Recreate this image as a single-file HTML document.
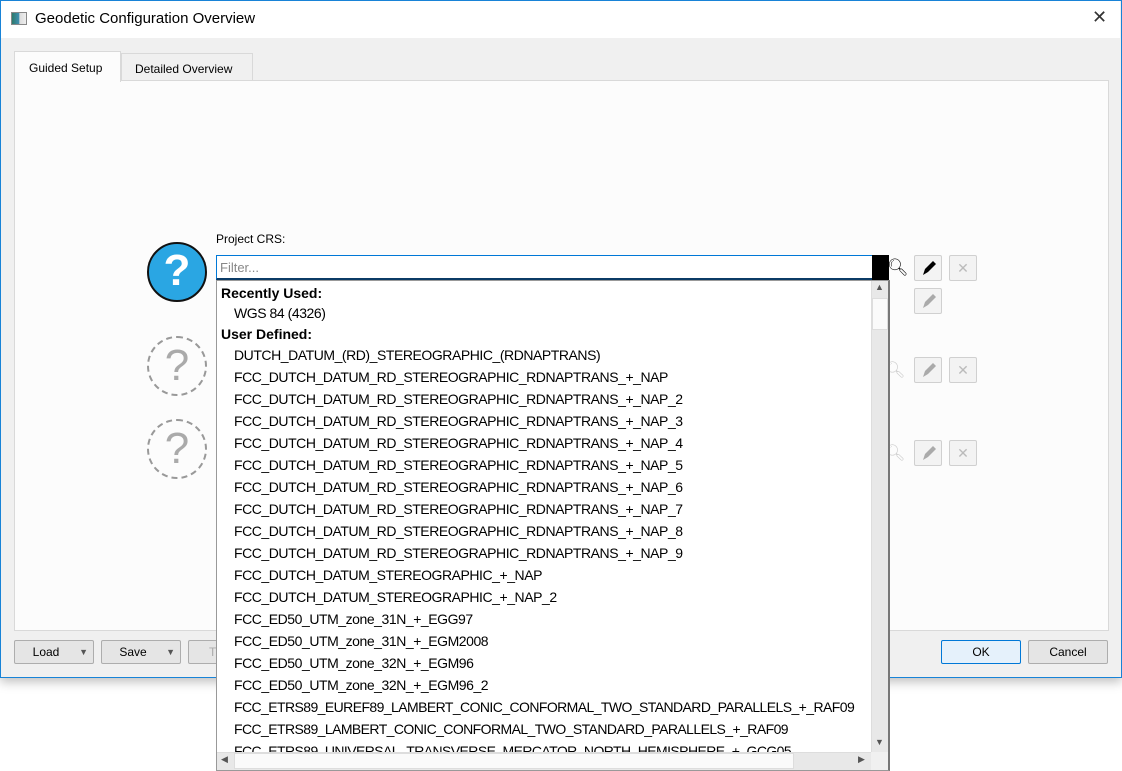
<!DOCTYPE html>
<html><head><style>
*{box-sizing:border-box;margin:0;padding:0}
body{width:1122px;height:771px;background:#fff;position:relative;overflow:hidden;font-family:"Liberation Sans",sans-serif;font-size:12px;color:#000}
.abs{position:absolute}
.win{left:0;top:0;width:1122px;height:678px;border:1px solid #1883d7;background:#f0f0f0;box-shadow:0 4px 10px rgba(0,0,0,.25)}
.title{left:1px;top:1px;width:1119px;height:37px;background:#fff}
.btn{position:absolute;border:1px solid #adadad;background:#e5e5e5;border-radius:2px;text-align:center;font-size:12px}
.tb{position:absolute;width:28px;height:26px;border:1px solid #d0d0d0;background:#f3f3f3;border-radius:2px}
.item{position:absolute;left:17px;font-size:14px;white-space:nowrap;letter-spacing:-0.45px}
.hdr{position:absolute;left:4px;font-size:14px;font-weight:bold;white-space:nowrap}
</style></head><body>
<div class="abs win"></div>
<div class="abs title"></div>
<div class="abs" style="left:11px;top:12px;width:16px;height:13px;border:1px solid #888;background:linear-gradient(90deg,#2d7a6c 0,#3f8fb0 50%,#ddd 55%,#eee)"></div>
<div class="abs" style="left:35px;top:10px;font-size:15px">Geodetic Configuration Overview</div>
<div class="abs" style="left:1092px;top:7px;font-size:18px;color:#333">✕</div>
<!-- tabs -->
<div class="abs" style="left:121px;top:53px;width:132px;height:28px;background:#f0f0f0;border:1px solid #d9d9d9;border-bottom:none"></div>
<div class="abs" style="left:135px;top:62px;font-size:12px">Detailed Overview</div>
<div class="abs" style="left:14px;top:80px;width:1095px;height:551px;background:#fcfcfc;border:1px solid #d9d9d9"></div>
<div class="abs" style="left:14px;top:51px;width:107px;height:31px;background:#fcfcfc;border:1px solid #d9d9d9;border-bottom:none"></div>
<div class="abs" style="left:29px;top:61px;font-size:12px">Guided Setup</div>
<!-- icons -->
<div class="abs" style="left:147px;top:242px;width:60px;height:60px;border-radius:50%;background:#2aa6e3;border:2px solid #111;color:#fff;font-weight:bold;font-size:44px;text-align:center;line-height:54px">?</div>
<div class="abs" style="left:147px;top:336px;width:60px;height:60px;border-radius:50%;border:2px dashed #999;color:#aaa;font-size:44px;text-align:center;line-height:56px">?</div>
<div class="abs" style="left:147px;top:419px;width:60px;height:60px;border-radius:50%;border:2px dashed #999;color:#aaa;font-size:44px;text-align:center;line-height:56px">?</div>
<div class="abs" style="left:216px;top:232px;font-size:12px">Project CRS:</div>
<!-- right buttons -->
<div class="abs" style="left:887px;top:258px;font-size:17px;color:#111">&#x1F50D;&#xFE0E;</div>
<div class="tb" style="left:914px;top:255px"><svg width="26" height="24"><path d="M8 19 L10 13 L18 5 L21 8 L13 16 Z" fill="#000"/></svg></div>
<div class="tb" style="left:949px;top:255px;color:#bbb;font-size:14px;text-align:center;line-height:24px">✕</div>
<div class="tb" style="left:914px;top:288px"><svg width="26" height="24"><path d="M8 19 L10 13 L18 5 L21 8 L13 16 Z" fill="#aaa"/></svg></div>
<div class="tb" style="left:914px;top:357px"><svg width="26" height="24"><path d="M8 19 L10 13 L18 5 L21 8 L13 16 Z" fill="#aaa"/></svg></div>
<div class="tb" style="left:949px;top:357px;color:#bbb;font-size:14px;text-align:center;line-height:24px">✕</div>
<div class="tb" style="left:914px;top:440px"><svg width="26" height="24"><path d="M8 19 L10 13 L18 5 L21 8 L13 16 Z" fill="#aaa"/></svg></div>
<div class="tb" style="left:949px;top:440px;color:#bbb;font-size:14px;text-align:center;line-height:24px">✕</div>
<div class="abs" style="left:885px;top:360px;font-size:16px;color:#ccc">&#x1F50D;&#xFE0E;</div>
<div class="abs" style="left:885px;top:443px;font-size:16px;color:#ccc">&#x1F50D;&#xFE0E;</div>
<!-- bottom buttons -->
<div class="btn" style="left:14px;top:640px;width:80px;height:24px;line-height:23px;padding-right:16px">Load<span style="position:absolute;right:5px;font-size:9px;color:#555">▼</span></div>
<div class="btn" style="left:101px;top:640px;width:80px;height:24px;line-height:23px;padding-right:16px">Save<span style="position:absolute;right:5px;font-size:9px;color:#555">▼</span></div>
<div class="btn" style="left:188px;top:640px;width:40px;height:24px;line-height:23px;color:#aaa;text-align:left;padding-left:20px">T</div>
<div class="btn" style="left:941px;top:640px;width:80px;height:24px;line-height:23px;border-color:#0078d7;background:#e5f1fb">OK</div>
<div class="btn" style="left:1028px;top:640px;width:80px;height:24px;line-height:23px">Cancel</div>
<!-- filter -->
<div class="abs" style="left:216px;top:255px;width:657px;height:25px;background:#fff;border:1px solid #0078d7;border-bottom:2px solid #0b3b66"></div>
<div class="abs" style="left:220px;top:260px;font-size:13px;color:#888">Filter...</div>
<div class="abs" style="left:872px;top:255px;width:17px;height:25px;background:#000"></div>
<!-- popup -->
<div class="abs" style="left:216px;top:280px;width:674px;height:491px;background:#fff;border:1px solid #999;border-right:2px solid #777;overflow:hidden">
 <div class="hdr" style="top:4px">Recently Used:</div>
 <div class="item" style="top:24px">WGS 84 (4326)</div>
 <div class="hdr" style="top:45px">User Defined:</div>
 <div class="item" style="top:66px">DUTCH_DATUM_(RD)_STEREOGRAPHIC_(RDNAPTRANS)</div>
 <div class="item" style="top:88px">FCC_DUTCH_DATUM_RD_STEREOGRAPHIC_RDNAPTRANS_+_NAP</div>
 <div class="item" style="top:110px">FCC_DUTCH_DATUM_RD_STEREOGRAPHIC_RDNAPTRANS_+_NAP_2</div>
 <div class="item" style="top:132px">FCC_DUTCH_DATUM_RD_STEREOGRAPHIC_RDNAPTRANS_+_NAP_3</div>
 <div class="item" style="top:154px">FCC_DUTCH_DATUM_RD_STEREOGRAPHIC_RDNAPTRANS_+_NAP_4</div>
 <div class="item" style="top:176px">FCC_DUTCH_DATUM_RD_STEREOGRAPHIC_RDNAPTRANS_+_NAP_5</div>
 <div class="item" style="top:198px">FCC_DUTCH_DATUM_RD_STEREOGRAPHIC_RDNAPTRANS_+_NAP_6</div>
 <div class="item" style="top:220px">FCC_DUTCH_DATUM_RD_STEREOGRAPHIC_RDNAPTRANS_+_NAP_7</div>
 <div class="item" style="top:242px">FCC_DUTCH_DATUM_RD_STEREOGRAPHIC_RDNAPTRANS_+_NAP_8</div>
 <div class="item" style="top:264px">FCC_DUTCH_DATUM_RD_STEREOGRAPHIC_RDNAPTRANS_+_NAP_9</div>
 <div class="item" style="top:286px">FCC_DUTCH_DATUM_STEREOGRAPHIC_+_NAP</div>
 <div class="item" style="top:308px">FCC_DUTCH_DATUM_STEREOGRAPHIC_+_NAP_2</div>
 <div class="item" style="top:330px">FCC_ED50_UTM_zone_31N_+_EGG97</div>
 <div class="item" style="top:352px">FCC_ED50_UTM_zone_31N_+_EGM2008</div>
 <div class="item" style="top:374px">FCC_ED50_UTM_zone_32N_+_EGM96</div>
 <div class="item" style="top:396px">FCC_ED50_UTM_zone_32N_+_EGM96_2</div>
 <div class="item" style="top:418px;letter-spacing:-0.58px">FCC_ETRS89_EUREF89_LAMBERT_CONIC_CONFORMAL_TWO_STANDARD_PARALLELS_+_RAF09</div>
 <div class="item" style="top:440px;letter-spacing:-0.58px">FCC_ETRS89_LAMBERT_CONIC_CONFORMAL_TWO_STANDARD_PARALLELS_+_RAF09</div>
 <div class="item" style="top:462px;letter-spacing:-0.58px">FCC_ETRS89_UNIVERSAL_TRANSVERSE_MERCATOR_NORTH_HEMISPHERE_+_GCG05</div>
 <!-- vscroll -->
 <div class="abs" style="left:654px;top:0;width:17px;height:472px;background:#e8e8e8;border-left:1px solid #ddd"></div>
 <div class="abs" style="left:655px;top:17px;width:16px;height:32px;background:#fafafa;border:1px solid #ddd"></div>
 <div class="abs" style="left:658px;top:1px;font-size:9px;color:#555">▲</div>
 <div class="abs" style="left:658px;top:456px;font-size:9px;color:#555">▼</div>
 <!-- hscroll -->
 <div class="abs" style="left:0;top:471px;width:654px;height:18px;background:#e8e8e8;border-top:1px solid #ddd"></div>
 <div class="abs" style="left:17px;top:472px;width:560px;height:16px;background:#fafafa;border:1px solid #ddd"></div>
 <div class="abs" style="left:4px;top:473px;font-size:9px;color:#555">◀</div>
 <div class="abs" style="left:641px;top:473px;font-size:9px;color:#555">▶</div>
 <div class="abs" style="left:654px;top:471px;width:17px;height:18px;background:#f0f0f0"></div>
</div>
</body></html>
